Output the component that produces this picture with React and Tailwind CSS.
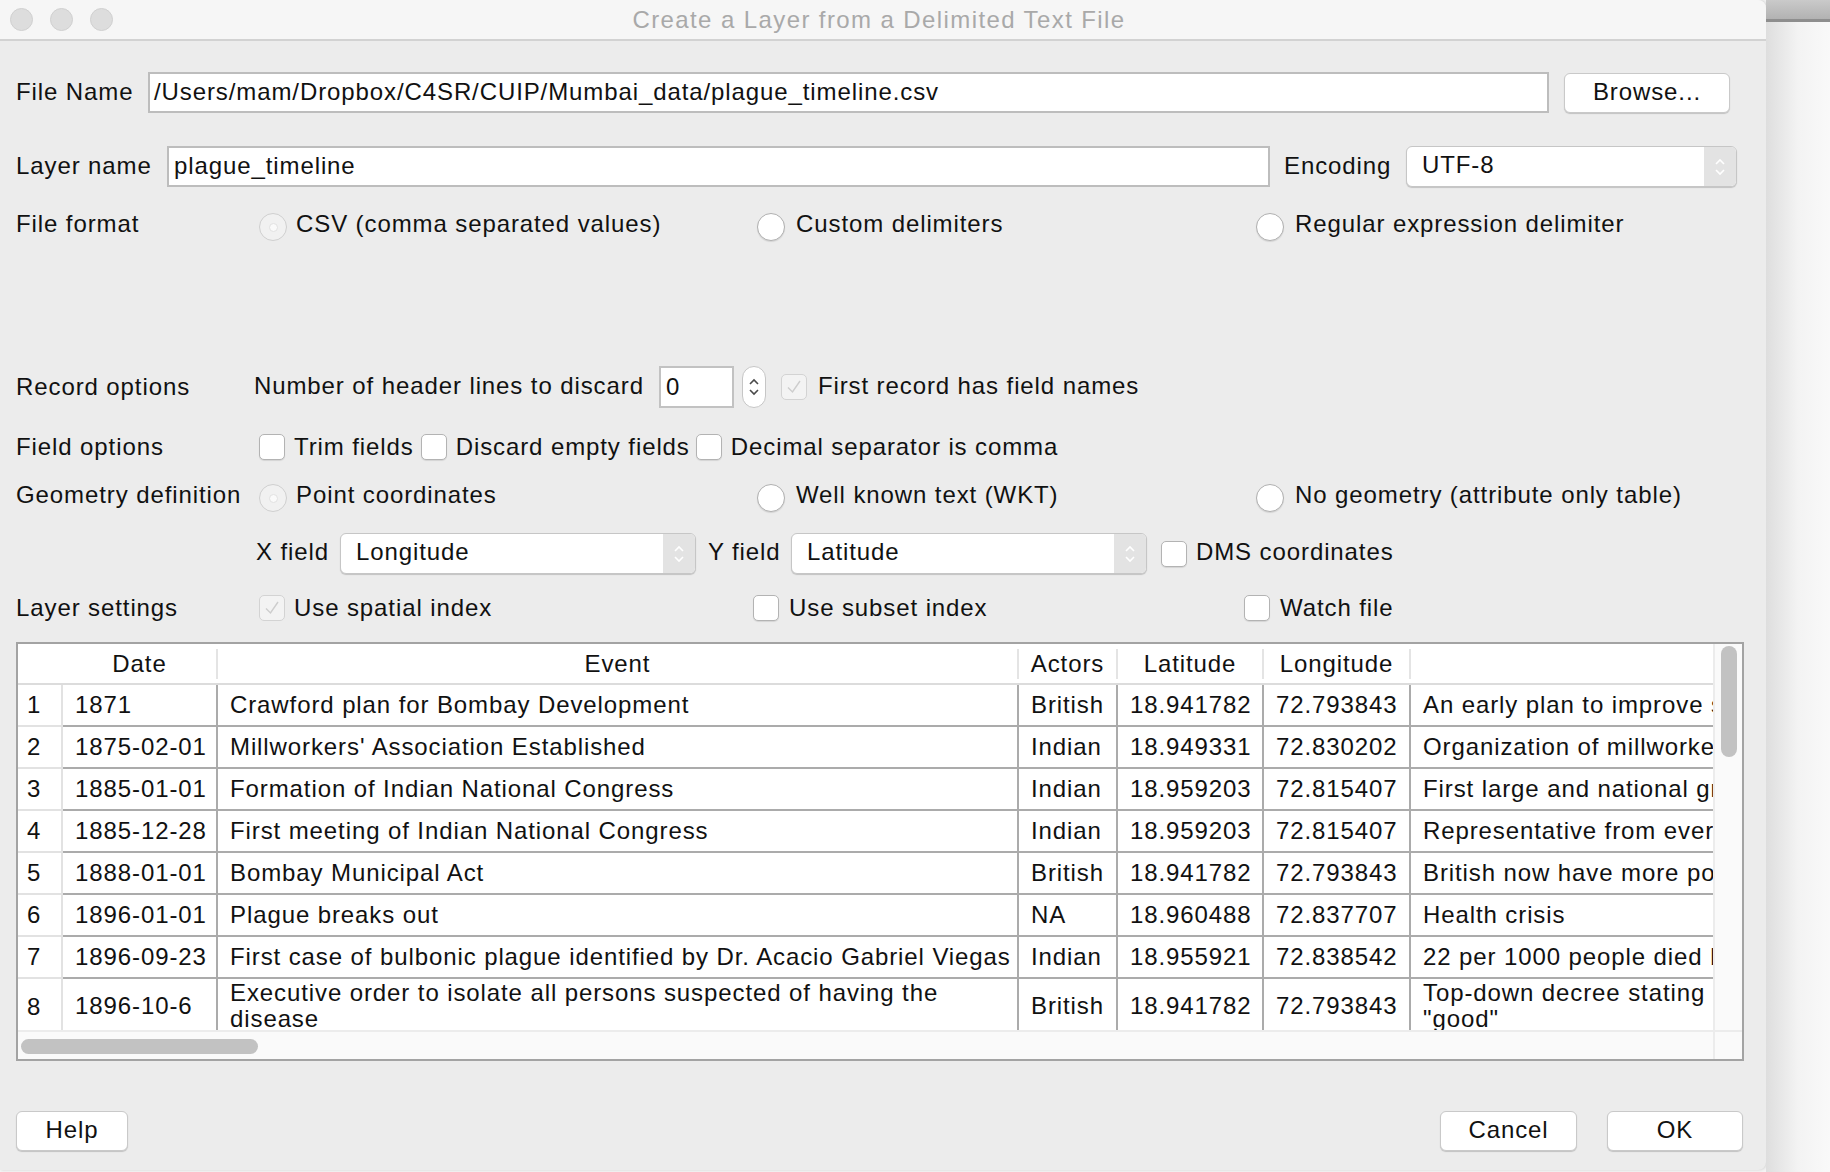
import React from 'react'

const rows = [
  ['1', '1871', 'Crawford plan for Bombay Development', 'British', '18.941782', '72.793843', 'An early plan to improve sanitation in the city'],
  ['2', '1875-02-01', "Millworkers' Association Established", 'Indian', '18.949331', '72.830202', 'Organization of millworkers in the mills'],
  ['3', '1885-01-01', 'Formation of Indian National Congress', 'Indian', '18.959203', '72.815407', 'First large and national group'],
  ['4', '1885-12-28', 'First meeting of Indian National Congress', 'Indian', '18.959203', '72.815407', 'Representative from every province'],
  ['5', '1888-01-01', 'Bombay Municipal Act', 'British', '18.941782', '72.793843', 'British now have more power'],
  ['6', '1896-01-01', 'Plague breaks out', 'NA', '18.960488', '72.837707', 'Health crisis'],
  ['7', '1896-09-23', 'First case of bulbonic plague identified by Dr. Acacio Gabriel Viegas', 'Indian', '18.955921', '72.838542', '22 per 1000 people died by'],
]

const Checkbox = ({ checked, disabled }) => (
  <span
    className={
      disabled
        ? 'w-[26px] h-[26px] shrink-0 rounded-[5px] border border-[#d3d3d3] bg-[#f3f3f3] flex items-center justify-center'
        : 'w-[26px] h-[26px] shrink-0 rounded-[5px] border border-[#b3b3b3] bg-white shadow-[0_1px_1px_rgba(0,0,0,0.1)] flex items-center justify-center'
    }
  >
    {checked && (
      <svg width="20" height="20" viewBox="0 0 20 20">
        <path d="M4 10.5 L8.5 15 L16 4" fill="none" stroke="#cdcdcd" strokeWidth="1.4" />
      </svg>
    )}
  </span>
)

const Radio = ({ selected }) => (
  <span
    className={
      selected
        ? 'w-[28px] h-[28px] shrink-0 mt-[6px] rounded-full border border-[#cfcfcf] bg-[#f1f1f1] flex items-center justify-center'
        : 'w-[28px] h-[28px] shrink-0 mt-[6px] rounded-full border border-[#b0b0b0] bg-white shadow-[0_1px_1px_rgba(0,0,0,0.1)]'
    }
  >
    {selected && <span className="w-[9px] h-[9px] rounded-full bg-[#fafafa] border border-[#e2e2e2]" />}
  </span>
)

const UpDown = ({ color = 'white' }) => (
  <svg width="14" height="24" viewBox="0 0 14 24">
    <path d="M3 9 L7 5 L11 9" fill="none" stroke={color} strokeWidth="1.6" />
    <path d="M3 15 L7 19 L11 15" fill="none" stroke={color} strokeWidth="1.6" />
  </svg>
)

const Combo = ({ text, w }) => (
  <div className={`${w} h-[41px] shrink-0 flex rounded-[6px] border border-[#c6c6c6] bg-white shadow-[0_1px_1px_rgba(0,0,0,0.18)] overflow-hidden`}>
    <div className="flex-1 pl-[15px] pb-[3px] flex items-center">{text}</div>
    <div className="w-[32px] bg-[#e3e3e3] flex items-center justify-center">
      <UpDown />
    </div>
  </div>
)

const Button = ({ children, w }) => (
  <div className={`${w} h-[40px] shrink-0 rounded-[6px] border border-[#c9c9c9] bg-white shadow-[0_1px_1px_rgba(0,0,0,0.18)] flex items-center justify-center pb-[2px]`}>
    {children}
  </div>
)

const Cell = ({ w, children, className = '' }) => (
  <div className={`${w} shrink-0 h-full border-r-2 border-b-2 border-[#ababab] px-[12px] flex items-center whitespace-nowrap overflow-hidden ${className}`}>
    {children}
  </div>
)

const HeadCell = ({ w, children }) => (
  <div className={`${w} shrink-0 h-full flex items-center`}>
    <div className="flex-1 text-center">{children}</div>
    <div className="w-[2px] h-[30px] bg-[#e4e4e4]" />
  </div>
)

export default function App() {
  return (
    <div className="w-[1830px] h-[1172px] flex bg-[#f4f4f4] overflow-hidden font-['Liberation_Sans',Arial,sans-serif] text-[24px] tracking-[0.9px] text-[#111]">
      {/* dialog */}
      <div className="w-[1766px] h-[1170px] shrink-0 flex flex-col bg-[#ececec] rounded-tr-[8px] rounded-br-[8px] overflow-hidden shadow-[1px_0_3px_rgba(0,0,0,0.15)]">
        {/* title bar */}
        <div className="h-[41px] shrink-0 grid grid-cols-[1fr_auto_1fr] items-center bg-[#f6f6f6] border-b-2 border-[#d2d2d2]">
          <div className="flex gap-[17px] pl-[10px]">
            <span className="w-[23px] h-[23px] rounded-full bg-[#dddddd] border border-[#d0d0d0]" />
            <span className="w-[23px] h-[23px] rounded-full bg-[#dddddd] border border-[#d0d0d0]" />
            <span className="w-[23px] h-[23px] rounded-full bg-[#dddddd] border border-[#d0d0d0]" />
          </div>
          <div className="text-[#a9a9a9] tracking-[1.4px] pr-[8px]">Create a Layer from a Delimited Text File</div>
          <div />
        </div>

        {/* File Name */}
        <div className="mt-[31px] h-[41px] flex items-center pl-[16px]">
          <div className="w-[132px] shrink-0 pb-[2px]">File Name</div>
          <div className="w-[1401px] h-[41px] shrink-0 bg-white border-2 border-[#bdbdbd] pl-[4px] pb-[2px] flex items-center">
            /Users/mam/Dropbox/C4SR/CUIP/Mumbai_data/plague_timeline.csv
          </div>
          <div className="ml-[15px]">
            <Button w="w-[166px]">Browse...</Button>
          </div>
        </div>

        {/* Layer name */}
        <div className="mt-[33px] h-[41px] flex items-center pl-[16px]">
          <div className="w-[151px] shrink-0 pb-[2px]">Layer name</div>
          <div className="w-[1103px] h-[41px] shrink-0 bg-white border-2 border-[#bdbdbd] pl-[5px] pb-[2px] flex items-center">
            plague_timeline
          </div>
          <div className="ml-[14px] w-[122px] shrink-0 pb-[2px]">Encoding</div>
          <Combo text="UTF-8" w="w-[331px]" />
        </div>

        {/* File format */}
        <div className="mt-[20px] h-[34px] flex items-center pl-[16px]">
          <div className="w-[243px] shrink-0">File format</div>
          <div className="w-[498px] shrink-0 flex items-center gap-[9px]">
            <Radio selected />
            <span>CSV (comma separated values)</span>
          </div>
          <div className="w-[499px] shrink-0 flex items-center gap-[11px]">
            <Radio />
            <span>Custom delimiters</span>
          </div>
          <div className="flex items-center gap-[11px]">
            <Radio />
            <span>Regular expression delimiter</span>
          </div>
        </div>

        {/* Record options */}
        <div className="mt-[124px] h-[44px] flex items-center pl-[16px]">
          <div className="w-[238px] shrink-0">Record options</div>
          <div className="shrink-0 pb-[2px]">Number of header lines to discard</div>
          <div className="ml-[15px] w-[75px] h-[42px] shrink-0 bg-white border-2 border-[#c2c2c2] pl-[5px] flex items-center">0</div>
          <div className="ml-[8px] w-[24px] h-[42px] shrink-0 rounded-full border border-[#c6c6c6] bg-white flex items-center justify-center">
            <UpDown color="#4a4a4a" />
          </div>
          <div className="ml-[15px] flex items-center gap-[11px]">
            <Checkbox checked disabled />
            <span className="pb-[2px]">First record has field names</span>
          </div>
        </div>

        {/* Field options */}
        <div className="mt-[21px] h-[34px] flex items-center pl-[16px]">
          <div className="w-[243px] shrink-0">Field options</div>
          <Checkbox />
          <span className="ml-[9px]">Trim fields</span>
          <span className="ml-[7px]"><Checkbox /></span>
          <span className="ml-[9px]">Discard empty fields</span>
          <span className="ml-[6px]"><Checkbox /></span>
          <span className="ml-[9px]">Decimal separator is comma</span>
        </div>

        {/* Geometry definition */}
        <div className="mt-[14px] h-[34px] flex items-center pl-[16px]">
          <div className="w-[243px] shrink-0">Geometry definition</div>
          <div className="w-[498px] shrink-0 flex items-center gap-[9px]">
            <Radio selected />
            <span>Point coordinates</span>
          </div>
          <div className="w-[499px] shrink-0 flex items-center gap-[11px]">
            <Radio />
            <span>Well known text (WKT)</span>
          </div>
          <div className="flex items-center gap-[11px]">
            <Radio />
            <span>No geometry (attribute only table)</span>
          </div>
        </div>

        {/* X / Y field */}
        <div className="mt-[21px] h-[41px] flex items-center pl-[256px]">
          <span className="w-[84px] shrink-0 pb-[3px]">X field</span>
          <Combo text="Longitude" w="w-[356px]" />
          <span className="ml-[12px] w-[83px] shrink-0 pb-[3px]">Y field</span>
          <Combo text="Latitude" w="w-[356px]" />
          <span className="ml-[14px]"><Checkbox /></span>
          <span className="ml-[9px] pb-[3px]">DMS coordinates</span>
        </div>

        {/* Layer settings */}
        <div className="mt-[17px] h-[34px] flex items-center pl-[16px]">
          <div className="w-[243px] shrink-0">Layer settings</div>
          <div className="w-[494px] shrink-0 flex items-center gap-[9px]">
            <Checkbox checked disabled />
            <span>Use spatial index</span>
          </div>
          <div className="w-[491px] shrink-0 flex items-center gap-[10px]">
            <Checkbox />
            <span>Use subset index</span>
          </div>
          <div className="flex items-center gap-[10px]">
            <Checkbox />
            <span>Watch file</span>
          </div>
        </div>

        {/* table */}
        <div className="mt-[17px] ml-[16px] w-[1728px] h-[419px] shrink-0 border-2 border-[#a3a3a3] bg-white flex flex-col">
          <div className="flex h-[386px]">
            <div className="w-[1695px] overflow-hidden flex flex-col">
              <div className="h-[41px] shrink-0 flex border-b-2 border-[#dcdcdc]">
                <div className="w-[45px] shrink-0" />
                <HeadCell w="w-[155px]">Date</HeadCell>
                <HeadCell w="w-[801px]">Event</HeadCell>
                <HeadCell w="w-[99px]">Actors</HeadCell>
                <HeadCell w="w-[146px]">Latitude</HeadCell>
                <HeadCell w="w-[147px]">Longitude</HeadCell>
                <div className="w-[420px] shrink-0" />
              </div>
              <div className="h-[345px] overflow-hidden">
                {rows.map(r => (
                  <div key={r[0]} className="h-[42px] flex">
                    <div className="w-[45px] shrink-0 h-full border-r-2 border-b-2 border-[#e2e2e2] pl-[9px] flex items-center">{r[0]}</div>
                    <Cell w="w-[155px]">{r[1]}</Cell>
                    <Cell w="w-[801px]">{r[2]}</Cell>
                    <Cell w="w-[99px]">{r[3]}</Cell>
                    <Cell w="w-[146px]">{r[4]}</Cell>
                    <Cell w="w-[147px]">{r[5]}</Cell>
                    <Cell w="w-[420px]">{r[6]}</Cell>
                  </div>
                ))}
                <div className="h-[56px] flex leading-[26px]">
                  <div className="w-[45px] shrink-0 h-full border-r-2 border-[#e2e2e2] pl-[9px] flex items-center">8</div>
                  <Cell w="w-[155px]">1896-10-6</Cell>
                  <Cell w="w-[801px]">
                    <div>
                      <div>Executive order to isolate all persons suspected of having the</div>
                      <div>disease</div>
                    </div>
                  </Cell>
                  <Cell w="w-[99px]">British</Cell>
                  <Cell w="w-[146px]">18.941782</Cell>
                  <Cell w="w-[147px]">72.793843</Cell>
                  <Cell w="w-[420px]">
                    <div>
                      <div>Top-down decree stating</div>
                      <div>"good"</div>
                    </div>
                  </Cell>
                </div>
              </div>
            </div>
            {/* vertical scrollbar */}
            <div className="flex-1 bg-[#fafafa] border-l-2 border-[#ececec] flex justify-center pt-[2px]">
              <div className="w-[16px] h-[111px] rounded-full bg-[#c2c2c2]" />
            </div>
          </div>
          <div className="flex-1 flex border-t-2 border-[#ececec]">
            <div className="w-[1695px] bg-[#fafafa] pl-[3px] pt-[7px]">
              <div className="w-[237px] h-[15px] rounded-full bg-[#c2c2c2]" />
            </div>
            <div className="flex-1 bg-[#fafafa] border-l-2 border-[#ececec]" />
          </div>
        </div>

        {/* buttons */}
        <div className="mt-[50px] flex items-center pl-[16px] pr-[23px]">
          <Button w="w-[112px]">Help</Button>
          <div className="flex-1" />
          <Button w="w-[137px]">Cancel</Button>
          <div className="ml-[30px]">
            <Button w="w-[136px]">OK</Button>
          </div>
        </div>
      </div>

      {/* outside the dialog */}
      <div className="flex-1 flex flex-col">
        <div className="h-[22px] shrink-0 bg-gradient-to-b from-[#cacaca] to-[#b2b2b2] border-b-[3px] border-[#8e8e8e]" />
        <div className="flex-1 bg-gradient-to-r from-[#dedede] via-[#f3f3f3] to-[#f9f9f9]" />
      </div>
    </div>
  )
}
